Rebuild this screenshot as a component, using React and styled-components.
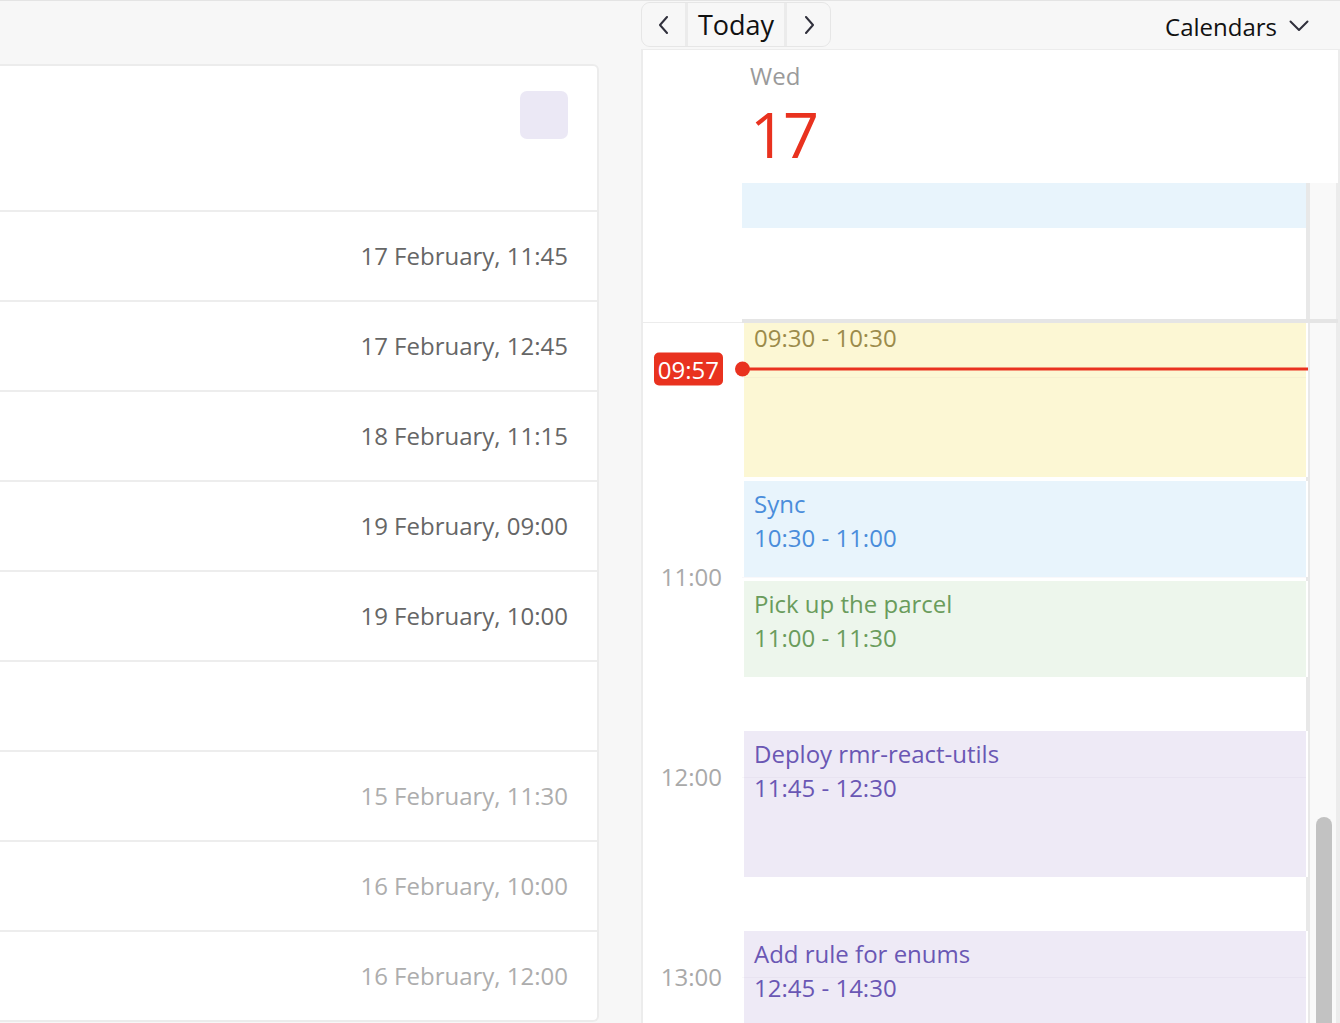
import React from 'react';
import styled, { createGlobalStyle } from 'styled-components';

const HOUR = 200;
const START = 9;
const END = 15;
const SCROLL_OFFSET = 146;
const NOW = 9 + 57 / 60 + 40 / 3600;

const yOf = (h) => (h - START) * HOUR;
const pad = (n) => String(n).padStart(2, '0');
const fmt = (h) => `${pad(Math.floor(h))}:${pad(Math.round((h % 1) * 60))}`;

const TONES = {
  yellow: { bg: '#fcf7d4', fg: '#9b8b4b' },
  blue: { bg: '#e8f4fc', fg: '#4a8ddb' },
  green: { bg: '#edf6ec', fg: '#6a9c5c' },
  purple: { bg: '#eeeaf6', fg: '#6a57b4' },
};

const EVENTS = [
  { id: 1, title: 'Weekly planning', start: 9.5, end: 10.5, tone: 'yellow' },
  { id: 2, title: 'Sync', start: 10.5, end: 11, tone: 'blue' },
  { id: 3, title: 'Pick up the parcel', start: 11, end: 11.5, tone: 'green' },
  { id: 4, title: 'Deploy rmr-react-utils', start: 11.75, end: 12.5, tone: 'purple' },
  { id: 5, title: 'Add rule for enums', start: 12.75, end: 14.5, tone: 'purple' },
];

const DATES = [
  { label: '17 February, 11:45' },
  { label: '17 February, 12:45' },
  { label: '18 February, 11:15' },
  { label: '19 February, 09:00' },
  { label: '19 February, 10:00' },
  { label: '' },
  { label: '15 February, 11:30', past: true },
  { label: '16 February, 10:00', past: true },
  { label: '16 February, 12:00', past: true },
];

const GlobalStyle = createGlobalStyle`
  * { box-sizing: border-box; }
  html, body { margin: 0; padding: 0; background: #f7f7f7; }
  body {
    font-family: "Open Sans", "Noto Sans", sans-serif;
    overflow: hidden;
    -webkit-font-smoothing: antialiased;
  }
`;

const Page = styled.div`
  display: flex;
  height: 1023px;
  border-top: 1px solid #e4e4e4;
  background: #f7f7f7;
  overflow: hidden;
`;

/* ---------- left list ---------- */
const LeftColumn = styled.section`
  width: 599px;
  flex: none;
  display: flex;
  flex-direction: column;
`;

const LeftHeader = styled.div`
  height: 63px;
  flex: none;
`;

const Card = styled.div`
  background: #fff;
  border: 2px solid #ececec;
  border-left: none;
  border-radius: 0 6px 6px 0;
  display: flex;
  flex-direction: column;
`;

const CardHeader = styled.div`
  height: 144px;
  display: flex;
  justify-content: flex-end;
  align-items: flex-start;
  padding: 25px 29px 0 0;
`;

const Swatch = styled.div`
  width: 48px;
  height: 48px;
  border-radius: 7px;
  background: #ebe8f5;
`;

const DateRow = styled.div`
  height: 90px;
  border-top: 2px solid #ededed;
  display: flex;
  align-items: center;
  justify-content: flex-end;
  padding-right: 29px;
  font-size: 24px;
  line-height: 34px;
  color: ${(p) => (p.$past ? '#adadad' : '#666666')};
`;

/* ---------- right calendar ---------- */
const RightColumn = styled.section`
  width: 699px;
  margin-left: 42px;
  flex: none;
  display: flex;
  flex-direction: column;
`;

const Toolbar = styled.div`
  height: 48px;
  flex: none;
  display: flex;
  align-items: flex-start;
  justify-content: space-between;
  padding-right: 31px;
`;

const NavGroup = styled.div`
  margin-top: 1px;
  height: 45px;
  display: flex;
  gap: 3px;
  background: #ebebeb;
  border: 1px solid #e6e6e6;
  border-radius: 9px;
  overflow: hidden;
`;

const NavButton = styled.button`
  border: 0;
  padding: 0;
  margin: 0;
  height: 100%;
  width: ${(p) => (p.$wide ? '96px' : '43px')};
  background: #f7f7f7;
  color: #111;
  font-family: inherit;
  font-size: 27px;
  display: flex;
  align-items: center;
  justify-content: center;
  cursor: pointer;
`;

const CalendarsButton = styled.button`
  border: 0;
  padding: 0;
  background: transparent;
  height: 50px;
  display: flex;
  align-items: center;
  gap: 12px;
  font-family: inherit;
  font-size: 24px;
  color: #111;
  cursor: pointer;
`;

const Panel = styled.div`
  flex: 1;
  min-height: 0;
  background: #fff;
  border: 2px solid #ececec;
  border-top-width: 1px;
  border-bottom: none;
  display: flex;
  flex-direction: column;
`;

const DayHeader = styled.div`
  height: 133px;
  flex: none;
  padding: 10px 0 0 107px;
`;

const Weekday = styled.div`
  font-size: 24px;
  line-height: 32px;
  color: #9a9a9a;
`;

const DayNumber = styled.div`
  margin-top: 10px;
  font-size: 63px;
  line-height: 64px;
  letter-spacing: -3px;
  color: #e9321f;
`;

const AllDayRow = styled.div`
  height: 140px;
  flex: none;
  display: flex;
`;

const AllDayGutter = styled.div`
  width: 99px;
  flex: none;
  border-bottom: 1px solid #ececec;
`;

const AllDayMain = styled.div`
  flex: 1;
  display: flex;
  border-bottom: 4px solid #e5e5e5;
`;

const AllDayColumn = styled.div`
  flex: 1;
  border-right: 4px solid #e8e8e8;
`;

const AllDayEvent = styled.div`
  height: 45px;
  background: ${TONES.blue.bg};
`;

const TrackStub = styled.div`
  width: 28px;
  flex: none;
  background: #f9f9f9;
  border-right: 2px solid #ececec;
`;

const Body = styled.div`
  flex: 1;
  min-height: 0;
  display: flex;
  overflow: hidden;
`;

const Viewport = styled.div`
  flex: 1;
  position: relative;
  overflow: hidden;
`;

const Content = styled.div`
  position: relative;
  display: flex;
  margin-top: ${(p) => -p.$offset}px;
`;

const Gutter = styled.div`
  width: 99px;
  flex: none;
`;

const HourSlot = styled.div`
  height: ${HOUR}px;
`;

const HourLabel = styled.div`
  text-align: right;
  padding-right: 20px;
  transform: translateY(-50%);
  font-size: 24px;
  line-height: 34px;
  color: #a9a9a9;
  visibility: ${(p) => (p.$hidden ? 'hidden' : 'visible')};
`;

const DayColumn = styled.div`
  flex: 1;
  position: relative;
  height: ${(p) => p.$hours * HOUR}px;
  border-right: 4px solid #e8e8e8;
`;

const HourLine = styled.div`
  position: absolute;
  left: 0;
  right: 0;
  height: 1px;
  background: rgba(80, 60, 120, 0.035);
  z-index: 2;
  pointer-events: none;
`;

const EventCard = styled.div`
  position: absolute;
  left: 2px;
  right: -2px;
  border-right: 2px solid #fff;
  padding: 6px 10px;
  overflow: hidden;
  background: ${(p) => TONES[p.$tone].bg};
  color: ${(p) => TONES[p.$tone].fg};
  font-size: 24px;
  line-height: 34px;
  z-index: 1;
`;

const EventLine = styled.div`
  white-space: nowrap;
`;

const NowMarker = styled.div`
  position: absolute;
  left: 0;
  right: 2px;
  height: 33px;
  display: flex;
  align-items: center;
  transform: translateY(-50%);
  z-index: 3;
  pointer-events: none;
`;

const NowBadgeSlot = styled.div`
  width: 99px;
  flex: none;
  display: flex;
  justify-content: flex-end;
  padding-right: 19px;
`;

const NowBadge = styled.div`
  background: #e9321f;
  color: #fff;
  font-size: 24px;
  line-height: 33px;
  padding: 0 4px;
  border-radius: 5px;
`;

const NowDot = styled.div`
  width: 15px;
  height: 15px;
  flex: none;
  margin-left: -7.5px;
  border-radius: 50%;
  background: #e9321f;
`;

const NowLine = styled.div`
  flex: 1;
  height: 3px;
  margin-left: -7px;
  background: #e9321f;
`;

const ScrollTrack = styled.div`
  width: 28px;
  flex: none;
  background: #f9f9f9;
  border-right: 2px solid #ececec;
  padding: 0 4px 0 6px;
  overflow: hidden;
`;

const ScrollThumb = styled.div`
  margin-top: 494px;
  height: 400px;
  border-radius: 8px;
  background: #c2c2c2;
`;

const Chevron = ({ dir }) => {
  const pts = {
    left: '9,1 2,9 9,17',
    right: '3,1 10,9 3,17',
  }[dir];
  return (
    <svg width="12" height="18" viewBox="0 0 12 18" fill="none">
      <polyline points={pts} stroke="#30303c" strokeWidth="2" strokeLinecap="round" strokeLinejoin="round" />
    </svg>
  );
};

const ChevronDown = () => (
  <svg width="20" height="12" viewBox="0 0 20 12" fill="none">
    <polyline points="1.5,1.5 10,10 18.5,1.5" stroke="#30303c" strokeWidth="2" strokeLinecap="round" strokeLinejoin="round" />
  </svg>
);

export default function App() {
  const hours = [];
  for (let h = START; h < END; h += 1) hours.push(h);

  return (
    <>
      <GlobalStyle />
      <Page>
        <LeftColumn>
          <LeftHeader />
          <Card>
            <CardHeader>
              <Swatch />
            </CardHeader>
            {DATES.map((d, i) => (
              <DateRow key={i} $past={d.past}>
                {d.label}
              </DateRow>
            ))}
          </Card>
        </LeftColumn>

        <RightColumn>
          <Toolbar>
            <NavGroup>
              <NavButton aria-label="Previous">
                <Chevron dir="left" />
              </NavButton>
              <NavButton $wide>Today</NavButton>
              <NavButton aria-label="Next">
                <Chevron dir="right" />
              </NavButton>
            </NavGroup>
            <CalendarsButton>
              Calendars
              <ChevronDown />
            </CalendarsButton>
          </Toolbar>

          <Panel>
            <DayHeader>
              <Weekday>Wed</Weekday>
              <DayNumber>17</DayNumber>
            </DayHeader>

            <AllDayRow>
              <AllDayGutter />
              <AllDayMain>
                <AllDayColumn>
                  <AllDayEvent />
                </AllDayColumn>
                <TrackStub />
              </AllDayMain>
            </AllDayRow>

            <Body>
              <Viewport>
                <Content $offset={SCROLL_OFFSET}>
                  <Gutter>
                    {hours.map((h) => (
                      <HourSlot key={h}>
                        <HourLabel $hidden={h === START || Math.abs(h - NOW) < 0.25}>{fmt(h)}</HourLabel>
                      </HourSlot>
                    ))}
                  </Gutter>
                  <DayColumn $hours={hours.length}>
                    {EVENTS.map((ev) => (
                      <EventCard
                        key={ev.id}
                        $tone={ev.tone}
                        style={{ top: yOf(ev.start) + 4, height: yOf(ev.end) - yOf(ev.start) - 4 }}
                      >
                        <EventLine>{ev.title}</EventLine>
                        <EventLine>
                          {fmt(ev.start)} - {fmt(ev.end)}
                        </EventLine>
                      </EventCard>
                    ))}
                    {hours.map((h) => (
                      <HourLine key={h} style={{ top: yOf(h) }} />
                    ))}
                  </DayColumn>
                  <NowMarker style={{ top: yOf(NOW) }}>
                    <NowBadgeSlot>
                      <NowBadge>{fmt(Math.floor(NOW * 60) / 60)}</NowBadge>
                    </NowBadgeSlot>
                    <NowDot />
                    <NowLine />
                  </NowMarker>
                </Content>
              </Viewport>
              <ScrollTrack>
                <ScrollThumb />
              </ScrollTrack>
            </Body>
          </Panel>
        </RightColumn>
      </Page>
    </>
  );
}
